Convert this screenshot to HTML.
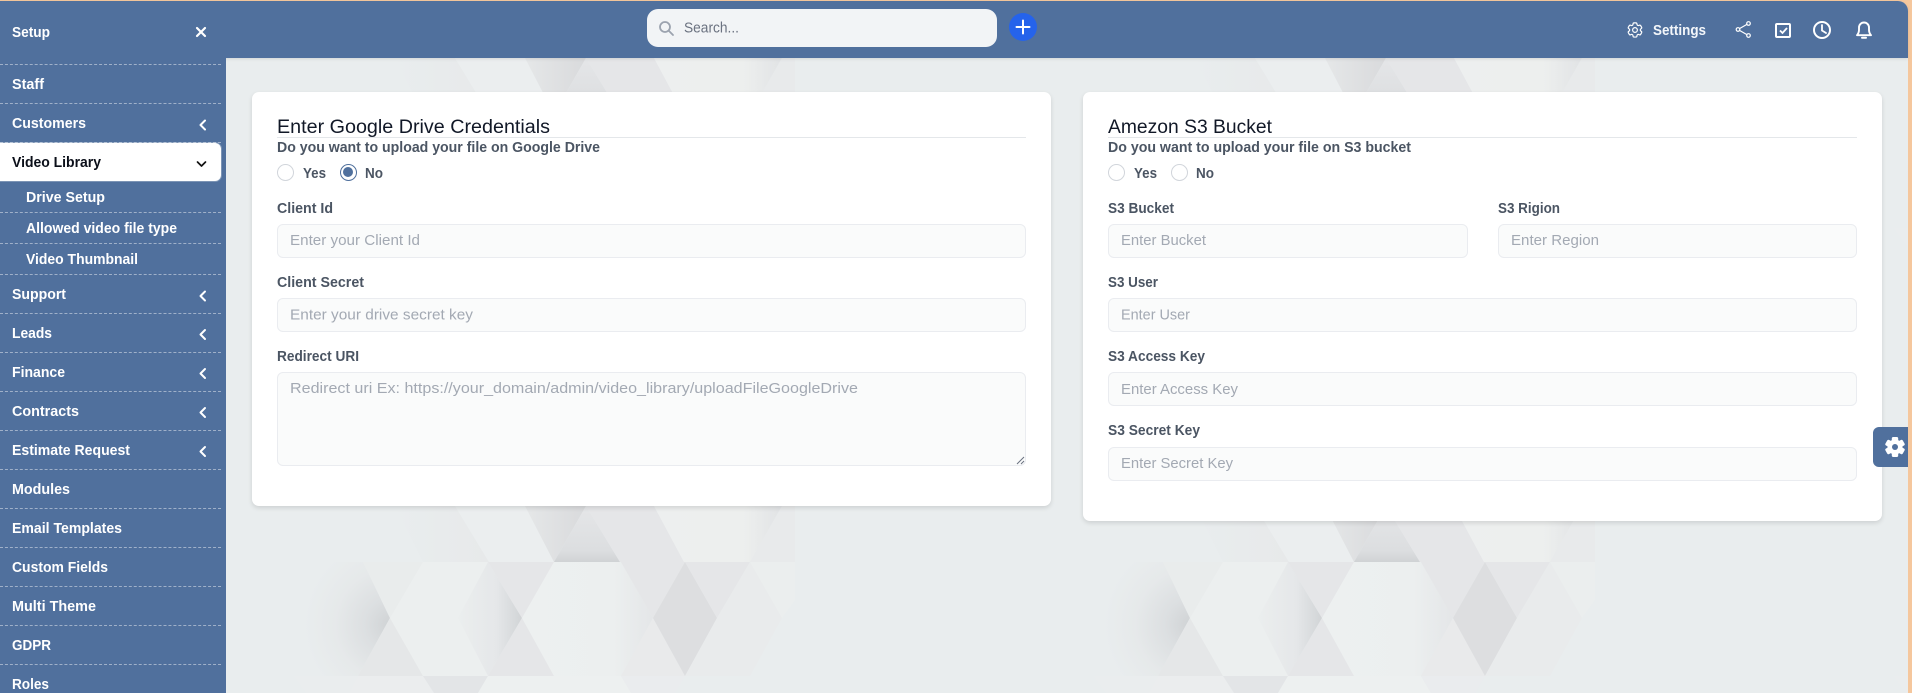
<!DOCTYPE html>
<html lang="en">
<head>
<meta charset="utf-8">
<title>Drive Setup</title>
<style>
html,body{margin:0;padding:0;width:1912px;height:693px;overflow:hidden;background:#f5c79d;font-family:"Liberation Sans",sans-serif}
.app{position:absolute;left:0;top:1px;width:1908px;height:692px;background:#e9edee;border-top-right-radius:10px;overflow:hidden}
svg{position:absolute;left:0;top:0;display:block}
svg.bg{clip-path:inset(0 4px 0 0)}
.top{position:absolute;left:0;top:1px;width:1908px;height:57px;background:#50709d;border-top-right-radius:10px;box-shadow:0 1px 3px rgba(0,0,0,.1)}
.side{position:absolute;left:0;top:1px;width:226px;height:692px;background:#50709d}
.dash{position:absolute;left:0;width:221px;height:0;border-top:1px dashed rgba(255,255,255,.45)}
.pill{position:absolute;left:0;top:143px;width:221px;height:38px;background:#fff;border-radius:0 6px 6px 0;box-shadow:0 0 0 1px rgba(255,255,255,.25)}
.search{position:absolute;left:647px;top:9px;width:350px;height:38px;background:#f2f4f6;border-radius:11px}
.plus{position:absolute;left:1009px;top:13px;width:28px;height:28px;border-radius:50%;background:#2563eb}
.card{position:absolute;background:#fff;border-radius:7px;box-shadow:0 2px 5px rgba(0,0,0,.12)}
.hr{position:absolute;height:1px;background:#e4e7ea}
.inp{position:absolute;box-sizing:border-box;background:#fafbfb;border:1px solid #eaecf0;border-radius:6px}
.radio{position:absolute;box-sizing:border-box;width:17px;height:17px;border-radius:50%;background:#fff;border:1px solid #d1d5db}
.radio.on{border:1.5px solid #50709d}
.radio.on:after{content:"";position:absolute;left:2px;top:2px;width:10px;height:10px;border-radius:50%;background:#50709d}
.tab{position:absolute;left:1873px;top:427px;width:35px;height:40px;background:#50709d;border-radius:6px 0 0 6px}
.s{font-weight:700;font-size:14.500px;fill:#fff}
.h{font-size:19px;fill:#111827}
.l{font-weight:700;font-size:14.500px;fill:#4b5563}
.r{font-size:14.500px;fill:#4b5563;font-weight:700}
.p{font-size:15px;fill:#a3a9b3}
</style>
</head>
<body>
<div class="app"></div>

<svg class="bg" width="1912" height="693" viewBox="0 0 1912 693">
<defs>
<radialGradient id="d1" gradientUnits="userSpaceOnUse" cx="392" cy="625" r="88"><stop offset="0" stop-color="#cfd2d4"/><stop offset=".3" stop-color="#dcdfe1"/><stop offset=".65" stop-color="#e6e9ea"/><stop offset="1" stop-color="#e9edee"/></radialGradient>
<linearGradient id="d2" x1="0" x2="1" y1="0" y2="0"><stop offset="0" stop-color="#ebeeee"/><stop offset=".6" stop-color="#e5e7e9"/><stop offset="1" stop-color="#d1d4d6"/></linearGradient>
<linearGradient id="d3" x1="0" x2="0" y1="0" y2="1"><stop offset="0" stop-color="#e5e6e8"/><stop offset=".8" stop-color="#dcdee0"/><stop offset="1" stop-color="#d0d3d5"/></linearGradient>
<linearGradient id="d4" x1="0" x2="1" y1="0" y2="0"><stop offset="0" stop-color="#e5e7e8"/><stop offset="1" stop-color="#d9dadc"/></linearGradient>
<linearGradient id="d5" x1="0" x2="1" y1="0" y2="0"><stop offset="0" stop-color="#edefef"/><stop offset=".7" stop-color="#edefee"/><stop offset="1" stop-color="#e1e3e5"/></linearGradient>
<linearGradient id="d7" x1="0" x2="1" y1="0" y2="0"><stop offset="0" stop-color="#edf0f0"/><stop offset=".7" stop-color="#ecefef"/><stop offset="1" stop-color="#e4e6e8"/></linearGradient>
<linearGradient id="d8" x1="0" x2="1" y1="0" y2="0"><stop offset="0" stop-color="#e9edee"/><stop offset="1" stop-color="#e7e9ea"/></linearGradient>
<g id="tile">
<polygon points="395,506 455,506 489,562 423,562" fill="url(#d8)"/>
<polygon points="455,506 525,506 554,562 489,562" fill="#ebeeef"/>
<polygon points="525,506 586,506 554,562" fill="url(#d4)"/>
<polygon points="586,506 620,562 554,562" fill="url(#d3)"/>
<polygon points="586,506 654,506 684,562 620,562" fill="#e5e6e8"/>
<polygon points="654,506 782,506 750,562 684,562" fill="url(#d5)"/>
<polygon points="782,506 795,506 795,562 750,562" fill="#e8eaeb"/>
<polygon points="290,562 363,562 390,618 358,676 290,676" fill="url(#d1)"/>
<polygon points="363,562 423,562 390,618" fill="#e9ecec"/>
<polygon points="390,618 423,676 358,676" fill="#e5e7e8"/>
<polygon points="390,618 423,562 488,562 522,618 488,676 423,676" fill="#ecefef"/>
<polygon points="458,618 488,562 522,618 488,676" fill="url(#d2)"/>
<polygon points="488,562 554,562 522,618" fill="#e5e6e8"/>
<polygon points="522,618 554,676 488,676" fill="#e5e6e8"/>
<polygon points="522,618 554,562 621,562 653,618 621,676 554,676" fill="url(#d7)"/>
<polygon points="621,562 685,562 653,618" fill="#e5e6e8"/>
<polygon points="653,618 685,676 621,676" fill="#e9eaeb"/>
<polygon points="653,618 685,562 717,618 685,676" fill="#dddee0"/>
<polygon points="685,562 750,562 717,618" fill="#e5e6e8"/>
<polygon points="717,618 750,562 782,618 750,676" fill="#e9ebec"/>
<polygon points="717,618 750,676 685,676" fill="#e9ebec"/>
<polygon points="750,562 795,562 795,600 782,618" fill="#ebeeee"/>
<polygon points="294,676 358,676 349,693 306,693" fill="#eaedee"/>
<polygon points="358,676 423,676 434,693 349,693" fill="#ebedee"/>
<polygon points="423,676 488,676 478,693 434,693" fill="#e3e5e7"/>
<polygon points="488,676 621,676 631,693 478,693" fill="#edf0f0"/>
<polygon points="621,676 685,676 675,693 631,693" fill="#eaecee"/>
</g>
</defs>
<use href="#tile"/>
<use href="#tile" x="800"/>
<use href="#tile" x="1600"/>
<use href="#tile" y="-448"/>
<use href="#tile" x="800" y="-448"/>
<use href="#tile" x="1600" y="-448"/>
</svg>

<div class="top"></div>
<div class="side"></div>
<div class="search"></div>
<div class="plus"></div>

<div class="dash" style="top:64px"></div>
<div class="dash" style="top:103px"></div>
<div class="dash" style="top:142px"></div>
<div class="dash" style="top:212px"></div>
<div class="dash" style="top:243px"></div>
<div class="dash" style="top:274px"></div>
<div class="dash" style="top:313px"></div>
<div class="dash" style="top:352px"></div>
<div class="dash" style="top:391px"></div>
<div class="dash" style="top:430px"></div>
<div class="dash" style="top:469px"></div>
<div class="dash" style="top:508px"></div>
<div class="dash" style="top:547px"></div>
<div class="dash" style="top:586px"></div>
<div class="dash" style="top:625px"></div>
<div class="dash" style="top:664px"></div>
<div class="pill"></div>

<div class="card" style="left:252px;top:92px;width:799px;height:414px"></div>
<div class="card" style="left:1083px;top:92px;width:799px;height:429px"></div>

<div class="hr" style="left:277px;top:137px;width:749px"></div>
<div class="hr" style="left:1108px;top:137px;width:749px"></div>

<div class="radio" style="left:277px;top:164px"></div>
<div class="radio on" style="left:340px;top:164px"></div>
<div class="radio" style="left:1108px;top:164px"></div>
<div class="radio" style="left:1171px;top:164px"></div>

<div class="inp" style="left:277px;top:224px;width:749px;height:34px"></div>
<div class="inp" style="left:277px;top:298px;width:749px;height:34px"></div>
<div class="inp" style="left:277px;top:372px;width:749px;height:94px"></div>
<div class="inp" style="left:1108px;top:224px;width:360px;height:34px"></div>
<div class="inp" style="left:1498px;top:224px;width:359px;height:34px"></div>
<div class="inp" style="left:1108px;top:298px;width:749px;height:34px"></div>
<div class="inp" style="left:1108px;top:372px;width:749px;height:34px"></div>
<div class="inp" style="left:1108px;top:447px;width:749px;height:34px"></div>

<div class="tab"></div>

<svg width="1912" height="693" viewBox="0 0 1912 693">
<text class="s" x="12" y="37" textLength="38" lengthAdjust="spacingAndGlyphs">Setup</text>
<text class="s" x="12" y="89" textLength="32" lengthAdjust="spacingAndGlyphs">Staff</text>
<text class="s" x="12" y="128" textLength="74" lengthAdjust="spacingAndGlyphs">Customers</text>
<text class="s" x="12" y="167" textLength="89" lengthAdjust="spacingAndGlyphs" style="fill:#0b0f19">Video Library</text>
<text class="s" x="26" y="202" textLength="79" lengthAdjust="spacingAndGlyphs">Drive Setup</text>
<text class="s" x="26" y="233" textLength="151" lengthAdjust="spacingAndGlyphs">Allowed video file type</text>
<text class="s" x="26" y="264" textLength="112" lengthAdjust="spacingAndGlyphs">Video Thumbnail</text>
<text class="s" x="12" y="299" textLength="54" lengthAdjust="spacingAndGlyphs">Support</text>
<text class="s" x="12" y="338" textLength="40" lengthAdjust="spacingAndGlyphs">Leads</text>
<text class="s" x="12" y="377" textLength="53" lengthAdjust="spacingAndGlyphs">Finance</text>
<text class="s" x="12" y="416" textLength="67" lengthAdjust="spacingAndGlyphs">Contracts</text>
<text class="s" x="12" y="455" textLength="118" lengthAdjust="spacingAndGlyphs">Estimate Request</text>
<text class="s" x="12" y="494" textLength="58" lengthAdjust="spacingAndGlyphs">Modules</text>
<text class="s" x="12" y="533" textLength="110" lengthAdjust="spacingAndGlyphs">Email Templates</text>
<text class="s" x="12" y="572" textLength="96" lengthAdjust="spacingAndGlyphs">Custom Fields</text>
<text class="s" x="12" y="611" textLength="84" lengthAdjust="spacingAndGlyphs">Multi Theme</text>
<text class="s" x="12" y="650" textLength="39" lengthAdjust="spacingAndGlyphs">GDPR</text>
<text class="s" x="12" y="689" textLength="37" lengthAdjust="spacingAndGlyphs">Roles</text>

<path d="M197 28L205 36M205 28L197 36" stroke="#fff" stroke-width="2.200" stroke-linecap="round" fill="none"/>
<g stroke="#fff" stroke-width="2" fill="none" stroke-linecap="round" stroke-linejoin="round">
<path d="M205 120.500L200.500 125L205 129.500"/>
<path d="M205 291.500L200.500 296L205 300.500"/>
<path d="M205 330L200.500 334.500L205 339"/>
<path d="M205 369L200.500 373.500L205 378"/>
<path d="M205 408L200.500 412.500L205 417"/>
<path d="M205 447L200.500 451.500L205 456"/>
</g>
<path d="M197.500 162L201.500 166L205.500 162" stroke="#111" stroke-width="1.700" fill="none" stroke-linecap="round" stroke-linejoin="round"/>

<circle cx="665" cy="27" r="5" stroke="#9ca3af" stroke-width="1.800" fill="none"/>
<path d="M669 31L673 35" stroke="#9ca3af" stroke-width="1.800" stroke-linecap="round"/>
<text x="684" y="32.500" font-size="14.500" fill="#6b7280" textLength="55" lengthAdjust="spacingAndGlyphs">Search...</text>
<path d="M1023 20.500V33.500M1016.500 27H1029.500" stroke="#fff" stroke-width="2" stroke-linecap="round"/>

<g transform="translate(1625.500,20.500) scale(.79)" fill="none" stroke="#fff" stroke-width="1.500" stroke-linecap="round" stroke-linejoin="round">
<path d="M9.594 3.94c.09-.542.56-.94 1.11-.94h2.593c.55 0 1.02.398 1.11.94l.213 1.281c.063.374.313.686.645.87.074.04.147.083.22.127.324.196.72.257 1.075.124l1.217-.456a1.125 1.125 0 011.37.49l1.296 2.247a1.125 1.125 0 01-.26 1.431l-1.003.827c-.293.24-.438.613-.431.992a6.759 6.759 0 010 .255c-.007.378.138.75.43.99l1.005.828c.424.35.534.954.26 1.43l-1.298 2.247a1.125 1.125 0 01-1.369.491l-1.217-.456c-.355-.133-.75-.072-1.076.124a6.57 6.57 0 01-.22.128c-.331.183-.581.495-.644.869l-.213 1.28c-.09.543-.56.941-1.11.941h-2.594c-.55 0-1.02-.398-1.11-.94l-.213-1.281c-.062-.374-.312-.686-.644-.87a6.52 6.52 0 01-.22-.127c-.325-.196-.72-.257-1.076-.124l-1.217.456a1.125 1.125 0 01-1.369-.49l-1.297-2.247a1.125 1.125 0 01.26-1.431l1.004-.827c.292-.24.437-.613.43-.992a6.932 6.932 0 010-.255c.007-.378-.138-.75-.43-.99l-1.004-.828a1.125 1.125 0 01-.26-1.43l1.297-2.247a1.125 1.125 0 011.37-.491l1.216.456c.356.133.751.072 1.076-.124.072-.044.146-.087.22-.128.332-.183.582-.495.644-.869l.214-1.281z"/>
<circle cx="12" cy="12" r="3"/>
</g>
<text x="1653" y="35" font-size="14.500" font-weight="700" fill="#f3f6fa" textLength="53" lengthAdjust="spacingAndGlyphs">Settings</text>
<g fill="none" stroke="#fff" stroke-width="1.200">
<circle cx="1748.500" cy="23.500" r="1.800"/><circle cx="1738" cy="29.500" r="1.800"/><circle cx="1748.500" cy="35.500" r="1.800"/>
<path d="M1739.700 28.500L1746.900 24.400M1739.700 30.500L1746.900 34.600"/>
</g>
<rect x="1776" y="24" width="14" height="13" rx="1" fill="none" stroke="#fff" stroke-width="2"/>
<path d="M1780 30.500L1782.500 33L1787 28" fill="none" stroke="#fff" stroke-width="1.800"/>
<circle cx="1822" cy="30" r="8" fill="none" stroke="#fff" stroke-width="2"/>
<path d="M1822 25V30.500L1826 33" fill="none" stroke="#fff" stroke-width="1.800" stroke-linecap="round"/>
<g fill="none" stroke="#fff" stroke-width="1.900" stroke-linejoin="round" stroke-linecap="round">
<path d="M1864 22.500a5 5 0 0 0-5 5v2.500c0 2-1 4-2 5.200h14c-1-1.200-2-3.200-2-5.200v-2.500a5 5 0 0 0-5-5z"/>
<path d="M1862 37.800h4" stroke-width="2"/>
</g>

<g transform="translate(1895,447)">
<g fill="#fff">
<rect x="-3.200" y="-10" width="6.400" height="20" rx="1.500"/>
<rect x="-3.200" y="-10" width="6.400" height="20" rx="1.500" transform="rotate(60)"/>
<rect x="-3.200" y="-10" width="6.400" height="20" rx="1.500" transform="rotate(120)"/>
<circle r="7.500"/>
</g>
<circle r="3" fill="#50709d"/>
</g>

<text class="h" x="277" y="133" textLength="273" lengthAdjust="spacingAndGlyphs">Enter Google Drive Credentials</text>
<text class="l" x="277" y="152" textLength="323" lengthAdjust="spacingAndGlyphs">Do you want to upload your file on Google Drive</text>
<text class="r" x="303" y="178" textLength="23" lengthAdjust="spacingAndGlyphs">Yes</text>
<text class="r" x="365" y="178" textLength="18" lengthAdjust="spacingAndGlyphs">No</text>
<text class="l" x="277" y="213" textLength="56" lengthAdjust="spacingAndGlyphs">Client Id</text>
<text class="p" x="290" y="245" textLength="130" lengthAdjust="spacingAndGlyphs">Enter your Client Id</text>
<text class="l" x="277" y="287" textLength="87" lengthAdjust="spacingAndGlyphs">Client Secret</text>
<text class="p" x="290" y="319.500" textLength="183" lengthAdjust="spacingAndGlyphs">Enter your drive secret key</text>
<text class="l" x="277" y="361" textLength="82" lengthAdjust="spacingAndGlyphs">Redirect URI</text>
<text class="p" x="290" y="393" textLength="568" lengthAdjust="spacingAndGlyphs">Redirect uri Ex: https://your_domain/admin/video_library/uploadFileGoogleDrive</text>
<path d="M1017 464L1024 457M1021 464L1024 461" stroke="#6b7280" stroke-width="1"/>

<text class="h" x="1108" y="133" textLength="164" lengthAdjust="spacingAndGlyphs">Amezon S3 Bucket</text>
<text class="l" x="1108" y="152" textLength="303" lengthAdjust="spacingAndGlyphs">Do you want to upload your file on S3 bucket</text>
<text class="r" x="1134" y="178" textLength="23" lengthAdjust="spacingAndGlyphs">Yes</text>
<text class="r" x="1196" y="178" textLength="18" lengthAdjust="spacingAndGlyphs">No</text>
<text class="l" x="1108" y="213" textLength="66" lengthAdjust="spacingAndGlyphs">S3 Bucket</text>
<text class="p" x="1121" y="245" textLength="85" lengthAdjust="spacingAndGlyphs">Enter Bucket</text>
<text class="l" x="1498" y="213" textLength="62" lengthAdjust="spacingAndGlyphs">S3 Rigion</text>
<text class="p" x="1511" y="245" textLength="88" lengthAdjust="spacingAndGlyphs">Enter Region</text>
<text class="l" x="1108" y="287" textLength="50" lengthAdjust="spacingAndGlyphs">S3 User</text>
<text class="p" x="1121" y="319.500" textLength="69" lengthAdjust="spacingAndGlyphs">Enter User</text>
<text class="l" x="1108" y="361" textLength="97" lengthAdjust="spacingAndGlyphs">S3 Access Key</text>
<text class="p" x="1121" y="394" textLength="117" lengthAdjust="spacingAndGlyphs">Enter Access Key</text>
<text class="l" x="1108" y="435" textLength="92" lengthAdjust="spacingAndGlyphs">S3 Secret Key</text>
<text class="p" x="1121" y="468" textLength="112" lengthAdjust="spacingAndGlyphs">Enter Secret Key</text>
</svg>
</body>
</html>
